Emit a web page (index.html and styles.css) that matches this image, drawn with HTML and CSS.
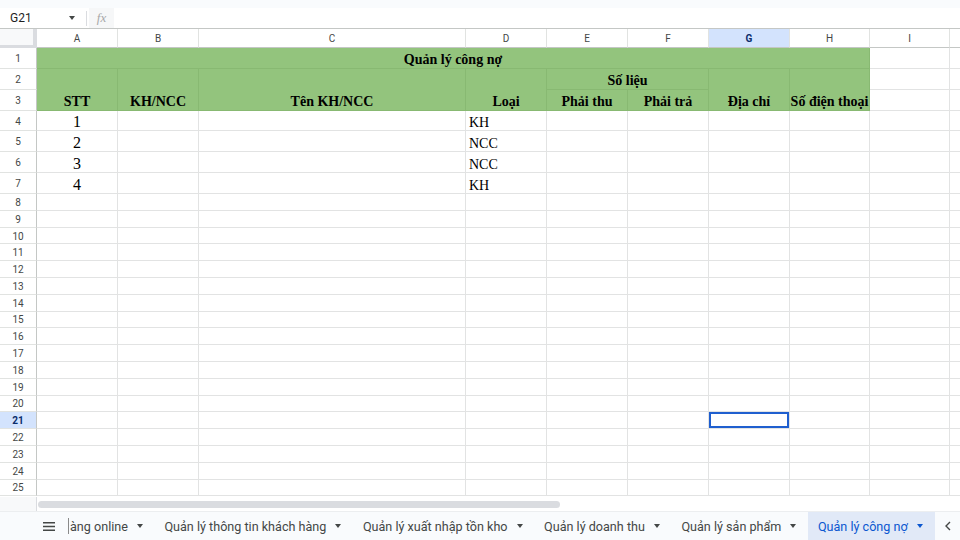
FILE: index.html
```html
<!DOCTYPE html>
<html lang="vi">
<head>
<meta charset="utf-8">
<title>Quản lý công nợ</title>
<link rel="stylesheet" href="styles.css">
</head>
<body>
<div class="top-strip"></div>
<div class="formula-bar">
  <div class="name-box"><span>G21</span><span class="caret"></span></div>
  <div class="sep"></div>
  <div class="fx">fx</div>
</div>
<div class="sheet">
  <div class="corner"></div>
  <div class="ch">A</div><div class="ch">B</div><div class="ch">C</div><div class="ch">D</div><div class="ch">E</div><div class="ch">F</div><div class="ch sel">G</div><div class="ch">H</div><div class="ch">I</div><div class="ch"></div>

  <div class="rh">1</div><div class="c g t s8">Quản lý công nợ</div><div class="c"></div><div class="c"></div>

  <div class="rh">2</div><div class="c g t r2">STT</div><div class="c g t r2">KH/NCC</div><div class="c g t r2">Tên KH/NCC</div><div class="c g t r2">Loại</div><div class="c g t s2">Số liệu</div><div class="c g t r2">Địa chỉ</div><div class="c g t r2">Số điện thoại</div><div class="c"></div><div class="c"></div>
  <div class="rh">3</div><div class="c g t">Phải thu</div><div class="c g t">Phải trả</div><div class="c"></div><div class="c"></div>

  <div class="rh">4</div><div class="c n">1</div><div class="c"></div><div class="c"></div><div class="c l">KH</div><div class="c"></div><div class="c"></div><div class="c"></div><div class="c"></div><div class="c"></div><div class="c"></div>
  <div class="rh">5</div><div class="c n">2</div><div class="c"></div><div class="c"></div><div class="c l">NCC</div><div class="c"></div><div class="c"></div><div class="c"></div><div class="c"></div><div class="c"></div><div class="c"></div>
  <div class="rh">6</div><div class="c n">3</div><div class="c"></div><div class="c"></div><div class="c l">NCC</div><div class="c"></div><div class="c"></div><div class="c"></div><div class="c"></div><div class="c"></div><div class="c"></div>
  <div class="rh">7</div><div class="c n">4</div><div class="c"></div><div class="c"></div><div class="c l">KH</div><div class="c"></div><div class="c"></div><div class="c"></div><div class="c"></div><div class="c"></div><div class="c"></div>

  <div class="rh">8</div><div class="c"></div><div class="c"></div><div class="c"></div><div class="c"></div><div class="c"></div><div class="c"></div><div class="c"></div><div class="c"></div><div class="c"></div><div class="c"></div>
  <div class="rh">9</div><div class="c"></div><div class="c"></div><div class="c"></div><div class="c"></div><div class="c"></div><div class="c"></div><div class="c"></div><div class="c"></div><div class="c"></div><div class="c"></div>
  <div class="rh">10</div><div class="c"></div><div class="c"></div><div class="c"></div><div class="c"></div><div class="c"></div><div class="c"></div><div class="c"></div><div class="c"></div><div class="c"></div><div class="c"></div>
  <div class="rh">11</div><div class="c"></div><div class="c"></div><div class="c"></div><div class="c"></div><div class="c"></div><div class="c"></div><div class="c"></div><div class="c"></div><div class="c"></div><div class="c"></div>
  <div class="rh">12</div><div class="c"></div><div class="c"></div><div class="c"></div><div class="c"></div><div class="c"></div><div class="c"></div><div class="c"></div><div class="c"></div><div class="c"></div><div class="c"></div>
  <div class="rh">13</div><div class="c"></div><div class="c"></div><div class="c"></div><div class="c"></div><div class="c"></div><div class="c"></div><div class="c"></div><div class="c"></div><div class="c"></div><div class="c"></div>
  <div class="rh">14</div><div class="c"></div><div class="c"></div><div class="c"></div><div class="c"></div><div class="c"></div><div class="c"></div><div class="c"></div><div class="c"></div><div class="c"></div><div class="c"></div>
  <div class="rh">15</div><div class="c"></div><div class="c"></div><div class="c"></div><div class="c"></div><div class="c"></div><div class="c"></div><div class="c"></div><div class="c"></div><div class="c"></div><div class="c"></div>
  <div class="rh">16</div><div class="c"></div><div class="c"></div><div class="c"></div><div class="c"></div><div class="c"></div><div class="c"></div><div class="c"></div><div class="c"></div><div class="c"></div><div class="c"></div>
  <div class="rh">17</div><div class="c"></div><div class="c"></div><div class="c"></div><div class="c"></div><div class="c"></div><div class="c"></div><div class="c"></div><div class="c"></div><div class="c"></div><div class="c"></div>
  <div class="rh">18</div><div class="c"></div><div class="c"></div><div class="c"></div><div class="c"></div><div class="c"></div><div class="c"></div><div class="c"></div><div class="c"></div><div class="c"></div><div class="c"></div>
  <div class="rh">19</div><div class="c"></div><div class="c"></div><div class="c"></div><div class="c"></div><div class="c"></div><div class="c"></div><div class="c"></div><div class="c"></div><div class="c"></div><div class="c"></div>
  <div class="rh">20</div><div class="c"></div><div class="c"></div><div class="c"></div><div class="c"></div><div class="c"></div><div class="c"></div><div class="c"></div><div class="c"></div><div class="c"></div><div class="c"></div>
  <div class="rh sel">21</div><div class="c"></div><div class="c"></div><div class="c"></div><div class="c"></div><div class="c"></div><div class="c"></div><div class="c active"></div><div class="c"></div><div class="c"></div><div class="c"></div>
  <div class="rh">22</div><div class="c"></div><div class="c"></div><div class="c"></div><div class="c"></div><div class="c"></div><div class="c"></div><div class="c"></div><div class="c"></div><div class="c"></div><div class="c"></div>
  <div class="rh">23</div><div class="c"></div><div class="c"></div><div class="c"></div><div class="c"></div><div class="c"></div><div class="c"></div><div class="c"></div><div class="c"></div><div class="c"></div><div class="c"></div>
  <div class="rh">24</div><div class="c"></div><div class="c"></div><div class="c"></div><div class="c"></div><div class="c"></div><div class="c"></div><div class="c"></div><div class="c"></div><div class="c"></div><div class="c"></div>
  <div class="rh">25</div><div class="c"></div><div class="c"></div><div class="c"></div><div class="c"></div><div class="c"></div><div class="c"></div><div class="c"></div><div class="c"></div><div class="c"></div><div class="c"></div>
</div>
<div class="hscroll">
  <div class="hs-left"></div>
  <div class="thumb"></div>
</div>
<div class="tabbar">
  <div class="menu">
    <svg width="12" height="9" viewBox="0 0 12 9"><path d="M0 0.75H12M0 4.5H12M0 8.25H12" stroke="#444746" stroke-width="1.5"/></svg>
  </div>
  <div class="tabs">
    <div class="tab first"><span>àng online</span><span class="tcaret"></span></div>
    <div class="tab"><span>Quản lý thông tin khách hàng</span><span class="tcaret"></span></div>
    <div class="tab"><span>Quản lý xuất nhập tồn kho</span><span class="tcaret"></span></div>
    <div class="tab"><span>Quản lý doanh thu</span><span class="tcaret"></span></div>
    <div class="tab"><span>Quản lý sản phẩm</span><span class="tcaret"></span></div>
    <div class="tab active-tab"><span>Quản lý công nợ</span><span class="tcaret"></span></div>
  </div>
  <div class="prev">
    <svg width="6" height="10" viewBox="0 0 6 10"><path d="M5 1L1 5L5 9" fill="none" stroke="#444746" stroke-width="1.4"/></svg>
  </div>
</div>
</body>
</html>
```

FILE: styles.css
```css
* { box-sizing: border-box; }

body {
  margin: 0;
  width: 960px;
  height: 540px;
  overflow: hidden;
  background: #fff;
  font-family: Roboto, "Liberation Sans", Arial, sans-serif;
  color: #1f1f1f;
}

.top-strip {
  height: 8px;
  background: #f9fbfd;
}

.formula-bar {
  height: 21px;
  display: flex;
  align-items: center;
  border-bottom: 1px solid #c4c7c5;
  background: #fff;
}

.name-box {
  width: 86px;
  height: 100%;
  display: flex;
  align-items: center;
  justify-content: space-between;
  padding: 0 11px 0 10px;
  font-size: 12px;
  color: #1f1f1f;
}

.caret {
  width: 0;
  height: 0;
  border-left: 3.5px solid transparent;
  border-right: 3.5px solid transparent;
  border-top: 4px solid #444746;
}

.sep {
  width: 1px;
  height: 15px;
  background: #dadce0;
}

.fx {
  width: 25px;
  height: 100%;
  margin-left: 2px;
  background: #f6f7f8;
  display: flex;
  align-items: center;
  justify-content: center;
  font-family: "Liberation Serif", serif;
  font-style: italic;
  font-size: 13px;
  color: #a8a8a8;
}

.sheet {
  display: grid;
  grid-template-columns: 37px 81px 81px 267px 81px 81px 81px 81px 80px 80px 80px;
  grid-template-rows: 19px repeat(7, 20.86px) repeat(18, 16.8px);
  width: 960px;
  height: 468px;
  overflow: hidden;
}

.corner {
  background: #f8f9fa;
  border-right: 4px solid #dadce0;
  border-bottom: 3px solid #dadce0;
}

.ch {
  display: flex;
  align-items: center;
  justify-content: center;
  padding-top: 1px;
  font-size: 10px;
  color: #444746;
  border-right: 1px solid #e1e3e1;
  border-bottom: 1px solid #c4c7c5;
}

.rh {
  display: flex;
  align-items: center;
  justify-content: center;
  padding-top: 1px;
  font-size: 10px;
  color: #444746;
  border-right: 1px solid #c4c7c5;
  border-bottom: 1px solid #e1e3e1;
}

.sel {
  background: #d3e3fd;
  color: #0b2d6b;
  font-weight: bold;
}

.c {
  border-right: 1px solid #e2e3e3;
  border-bottom: 1px solid #e2e3e3;
  white-space: nowrap;
}

.g {
  background: #93c47d;
  border-color: #88b972;
}

.s8 { grid-column: span 8; }
.s2 { grid-column: span 2; }
.r2 { grid-row: span 2; }

.t {
  display: flex;
  align-items: flex-end;
  justify-content: center;
  padding-bottom: 0;
  font-family: "Liberation Serif", "Times New Roman", serif;
  font-weight: bold;
  font-size: 14px;
  color: #000;
}

.n {
  display: flex;
  align-items: flex-end;
  justify-content: center;
  line-height: 16px;
  padding-bottom: 0;
  font-family: "Liberation Serif", "Times New Roman", serif;
  font-size: 16px;
  color: #000;
}

.l {
  display: flex;
  align-items: flex-end;
  line-height: 14px;
  padding: 0 0 0 3px;
  font-family: "Liberation Serif", "Times New Roman", serif;
  font-size: 14px;
  color: #000;
}

.active {
  box-shadow: inset 0 0 0 2px #1f5fcf;
}

.hscroll {
  height: 14px;
  display: flex;
  align-items: center;
  background: #fff;
}

.hs-left {
  width: 37px;
  height: 100%;
  border-right: 1px solid #dadce0;
  background: #f8f9fa;
}

.thumb {
  width: 522px;
  height: 7px;
  margin-left: 1px;
  border-radius: 4px;
  background: #dadce0;
}

.tabbar {
  height: 29px;
  display: flex;
  align-items: center;
  background: #f9fbfd;
  border-top: 1px solid #eceef0;
}

.menu {
  width: 68px;
  padding-left: 43px;
  display: flex;
  align-items: center;
}

.tabs {
  flex: 1;
  height: 100%;
  display: flex;
  overflow: hidden;
}

.tab {
  height: 100%;
  display: flex;
  align-items: center;
  gap: 9px;
  padding: 0 11.5px 0 10px;
  font-size: 12.6px;
  color: #444746;
  white-space: nowrap;
}

.tab.first {
  padding-left: 1px;
  border-left: 1px solid #8a8a8a;
  height: 16px;
  margin-top: 6px;
}

.tcaret {
  width: 0;
  height: 0;
  border-left: 3.5px solid transparent;
  border-right: 3.5px solid transparent;
  border-top: 4px solid #444746;
}

.active-tab {
  background: #e1e9f7;
  color: #0b57d0;
  padding-right: 12px;
}

.active-tab .tcaret {
  border-top-color: #0b57d0;
}

.prev {
  width: 25px;
  display: flex;
  justify-content: center;
}
```
